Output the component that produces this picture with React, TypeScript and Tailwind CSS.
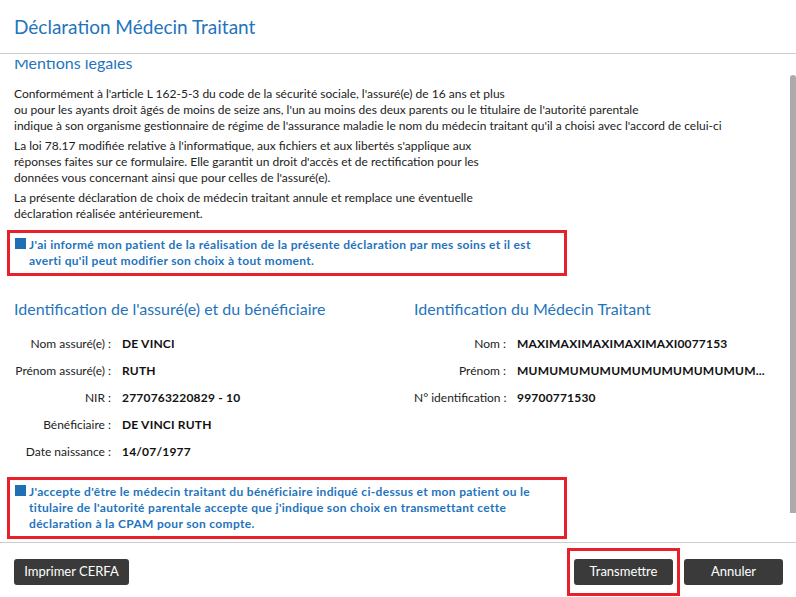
const rowsLeft = [
  { label: 'Nom assuré(e) :', value: 'DE VINCI' },
  { label: 'Prénom assuré(e) :', value: 'RUTH' },
  { label: 'NIR :', value: '2770763220829 - 10' },
  { label: 'Bénéficiaire :', value: 'DE VINCI RUTH' },
  { label: 'Date naissance :', value: '14/07/1977' },
];

const rowsRight = [
  { label: 'Nom :', value: 'MAXIMAXIMAXIMAXIMAXI0077153' },
  { label: 'Prénom :', value: 'MUMUMUMUMUMUMUMUMUMUMUM...' },
  { label: 'N° identification :', value: '99700771530' },
];

function InfoRow({ label, value, labelW }: { label: string; value: string; labelW: string }) {
  return (
    <div className="flex items-center h-[27px]">
      <div className={`${labelW} text-right text-[12px] text-[#222] pr-[11px] whitespace-nowrap`}>{label}</div>
      <div className="text-[12px] font-bold tracking-[0.2px] text-[#111] whitespace-nowrap">{value}</div>
    </div>
  );
}

function CheckBlock({ children }: { children: React.ReactNode }) {
  return (
    <div className="mx-[7px] w-[560px] border-[3px] border-[#e8202a] py-[4px] pl-[5px]">
      <div className="flex gap-[3px] text-[12px] font-bold leading-[16px] tracking-[0.32px] text-[#1f74bd] whitespace-nowrap">
        <span className="mt-[1px] h-[11px] w-[11px] shrink-0 bg-[#1f6fb5]" />
        <div>{children}</div>
      </div>
    </div>
  );
}

function DarkButton({ children, w }: { children: React.ReactNode; w: string }) {
  return (
    <button className={`${w} h-[26px] rounded-[3px] bg-[#3a3a3a] text-[13px] text-white`}>{children}</button>
  );
}

export default function App() {
  return (
    <div
      className="w-[796px] h-[597px] bg-white flex flex-col overflow-hidden"
      style={{ fontFamily: 'Lato, "Open Sans", sans-serif' }}
    >
      <div className="h-[54px] shrink-0 border-b border-[#cccccc] px-[14px] pt-[15px]">
        <h1 className="text-[19px] leading-[24px] text-[#1f74bd]">Déclaration Médecin Traitant</h1>
      </div>

      <div className="flex-1 min-h-0 flex flex-col pt-[6px]">
        <div className="relative flex-1 overflow-hidden">
          <div className="absolute right-0 top-[15px] h-[438px] w-[6px] rounded-t-[3px] bg-[#ababab]" />
          <div className="-mt-[8px]">
            <h2 className="px-[14px] text-[16px] leading-[22px] text-[#1f74bd]">Mentions légales</h2>
            <div className="px-[14px] pt-[12px] text-[12px] leading-[16px] text-[#222] whitespace-nowrap">
              <p>
                Conformément à l'article L 162-5-3 du code de la sécurité sociale, l'assuré(e) de 16 ans et plus
                <br />
                ou pour les ayants droit âgés de moins de seize ans, l'un au moins des deux parents ou le titulaire de l'autorité parentale
                <br />
                indique à son organisme gestionnaire de régime de l'assurance maladie le nom du médecin traitant qu'il a choisi avec l'accord de celui-ci
              </p>
              <p className="mt-[4px]">
                La loi 78.17 modifiée relative à l'informatique, aux fichiers et aux libertés s'applique aux
                <br />
                réponses faites sur ce formulaire. Elle garantit un droit d'accès et de rectification pour les
                <br />
                données vous concernant ainsi que pour celles de l'assuré(e).
              </p>
              <p className="mt-[4px]">
                La présente déclaration de choix de médecin traitant annule et remplace une éventuelle
                <br />
                déclaration réalisée antérieurement.
              </p>
            </div>

            <div className="mt-[8px]">
              <CheckBlock>
                J'ai informé mon patient de la réalisation de la présente déclaration par mes soins et il est
                <br />
                averti qu'il peut modifier son choix à tout moment.
              </CheckBlock>
            </div>

            <div className="mt-[22px] flex px-[14px]">
              <div className="w-[400px]">
                <h3 className="text-[16px] leading-[22px] text-[#1f74bd]">Identification de l'assuré(e) et du bénéficiaire</h3>
                <div className="mt-[10px]">
                  {rowsLeft.map((r) => (
                    <InfoRow key={r.label} {...r} labelW="w-[108px]" />
                  ))}
                </div>
              </div>
              <div className="flex-1">
                <h3 className="text-[16px] leading-[22px] text-[#1f74bd]">Identification du Médecin Traitant</h3>
                <div className="mt-[10px]">
                  {rowsRight.map((r) => (
                    <InfoRow key={r.label} {...r} labelW="w-[103px]" />
                  ))}
                </div>
              </div>
            </div>

            <div className="mt-[12px]">
              <CheckBlock>
                J'accepte d'être le médecin traitant du bénéficiaire indiqué ci-dessus et mon patient ou le
                <br />
                titulaire de l'autorité parentale accepte que j'indique son choix en transmettant cette
                <br />
                déclaration à la CPAM pour son compte.
              </CheckBlock>
            </div>
          </div>
        </div>
      </div>

      <div className="h-[55px] shrink-0 border-t border-[#cccccc] flex items-start pl-[14px] pr-[13px]">
        <div className="pt-[15px]">
          <DarkButton w="w-[115px]">Imprimer CERFA</DarkButton>
        </div>
        <div className="flex-1" />
        <div className="mt-[5px] border-[3px] border-[#e8202a] px-[4px] pt-[7px] pb-[8px]">
          <DarkButton w="w-[99px]">Transmettre</DarkButton>
        </div>
        <div className="pt-[15px] pl-[4px]">
          <DarkButton w="w-[99px]">Annuler</DarkButton>
        </div>
      </div>
    </div>
  );
}
